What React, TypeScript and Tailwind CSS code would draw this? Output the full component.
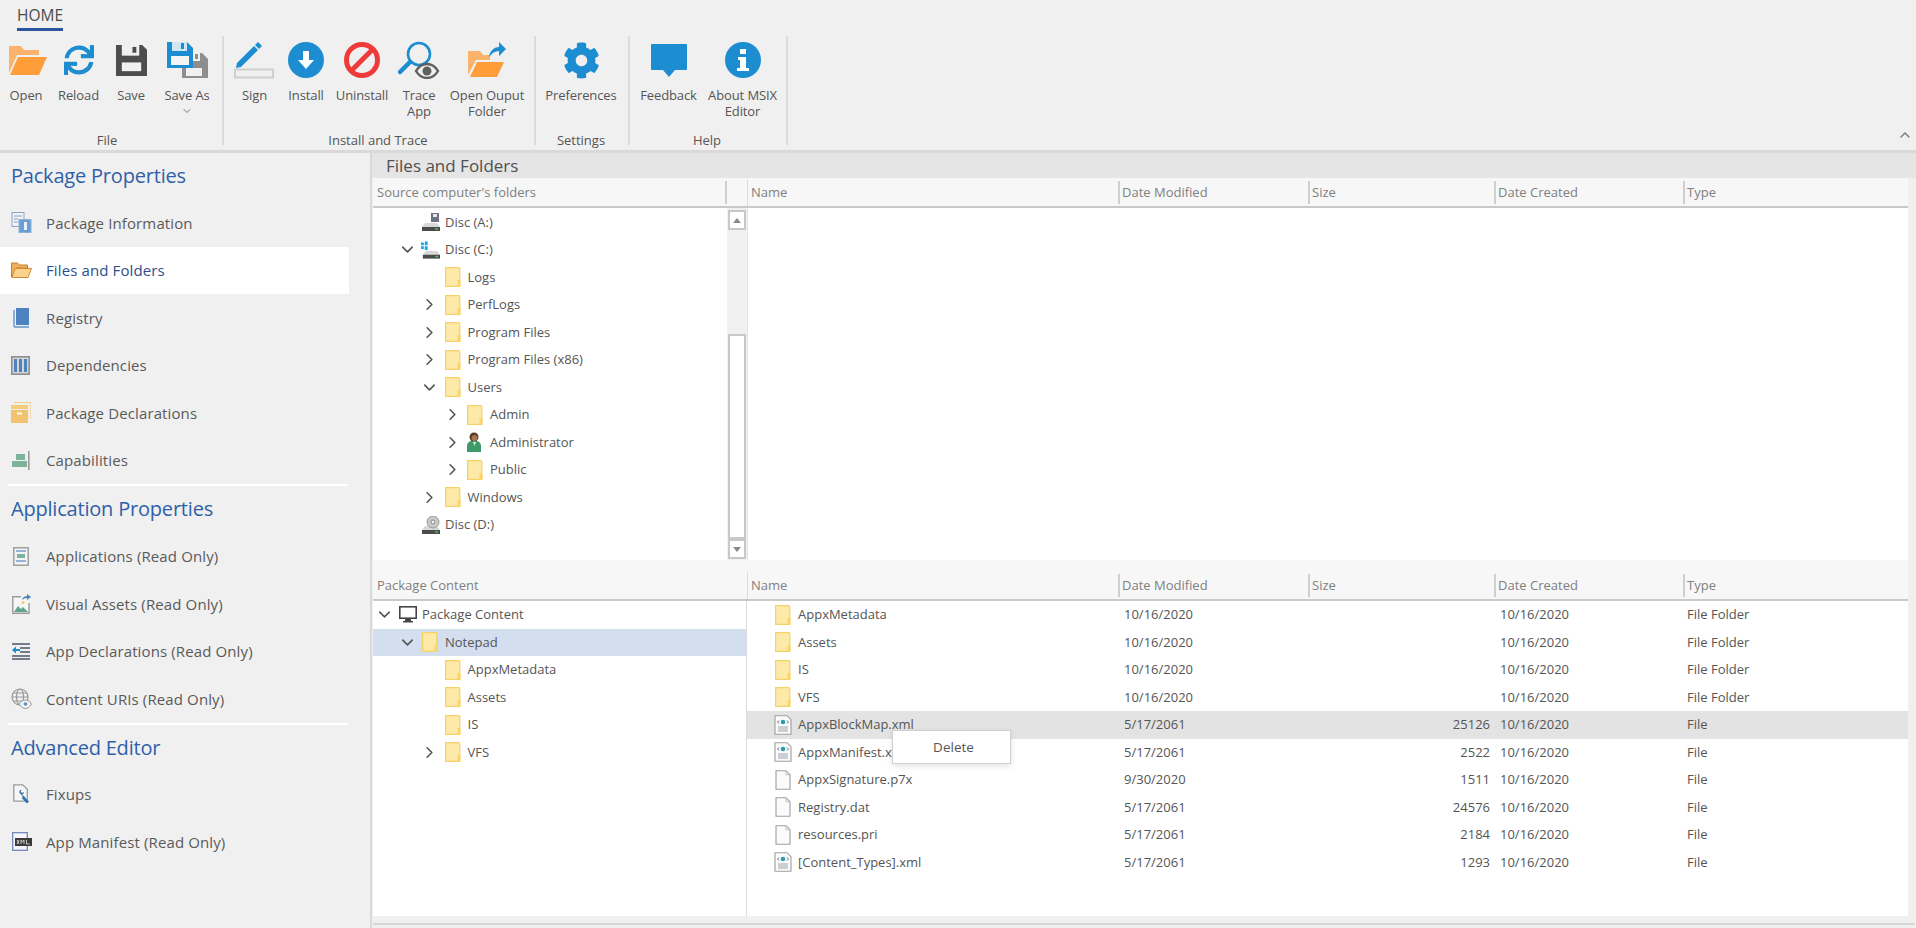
import React from "react";
import { ChevronDown, ChevronRight, ChevronUp } from "lucide-react";
import { FaSync, FaCog } from "react-icons/fa";

const BLUE = "#1b8dd0";

const IcoOpen = () => (
  <svg width="38" height="32" viewBox="0 0 38 32" className="ml-[3px]">
    <path d="M0 2h12l3 4h15v5H8L0 29z" fill="#fbb36b" />
    <path d="M9 13h29l-8 18H1z" fill="#ff9d3b" />
  </svg>
);
const IcoSave = () => (
  <svg width="31" height="31" viewBox="0 0 32 32" className="ml-[1px]">
    <path d="M0 0h27l5 5v27H0z" fill="#4d4d4d" />
    <rect x="6" y="0" width="18" height="11" fill="#f0f0f0" />
    <rect x="17" y="2" width="4" height="6" fill="#4d4d4d" />
    <rect x="6" y="18" width="20" height="9" fill="#f0f0f0" />
  </svg>
);
const IcoSaveAs = () => (
  <svg width="41" height="36" viewBox="0 0 41 36">
    <path d="M15 11h20l6 6v19H15z" fill="#8e8e8e" />
    <rect x="19" y="26" width="16" height="8" fill="#f0f0f0" />
    <rect x="22" y="11" width="11" height="8" fill="#f0f0f0" />
    <rect x="28" y="12" width="3" height="5" fill="#8e8e8e" />
    <path d="M0 0h20l6 6v20H0z" fill={BLUE} />
    <rect x="5" y="0" width="15" height="9" fill="#d0e6f4" />
    <rect x="14" y="1" width="3" height="6" fill={BLUE} />
    <rect x="4" y="14" width="18" height="9" fill="#f4f4f4" />
  </svg>
);
const IcoSign = () => (
  <svg width="41" height="38" viewBox="0 0 41 38">
    <path d="M3 22 L20 5 L24 9 L7 26 L2 27z" fill={BLUE} />
    <path d="M21 4l3-3 4 4-3 3z" fill={BLUE} />
    <rect x="1" y="28.5" width="38" height="8" fill="none" stroke="#cfcfcf" strokeWidth="2" />
  </svg>
);
const IcoInstall = () => (
  <svg width="36" height="36" viewBox="0 0 36 36">
    <circle cx="18" cy="18" r="18" fill={BLUE} />
    <path d="M15 9h6v9h5l-8 9-8-9h5z" fill="#fff" />
  </svg>
);
const IcoUninstall = () => (
  <svg width="36" height="36" viewBox="0 0 36 36">
    <circle cx="18" cy="18" r="15.5" fill="none" stroke="#ee3a3a" strokeWidth="5" />
    <path d="M8 28 28 8" stroke="#ee3a3a" strokeWidth="5" />
  </svg>
);
const IcoTrace = () => (
  <svg width="42" height="38" viewBox="0 0 42 38">
    <circle cx="21" cy="13" r="11" fill="none" stroke={BLUE} strokeWidth="2.6" />
    <path d="M12 21 2 31" stroke={BLUE} strokeWidth="4.5" strokeLinecap="round" />
    <path d="M18 30c3-5 7-7 11-7s8 2 11 7c-3 5-7 7-11 7s-8-2-11-7z" fill="#f0f0f0" stroke="#5f5f5f" strokeWidth="2.4" />
    <circle cx="29" cy="30" r="4.5" fill="#5f5f5f" />
  </svg>
);
const IcoOutput = () => (
  <svg width="38" height="36" viewBox="0 0 38 36">
    <path d="M0 9h12l3 4h7v5H8L0 33z" fill="#fbb36b" />
    <path d="M9 20h27l-7 15H2z" fill="#ff9d3b" />
    <path d="M21 15c1-7 6-10 10-10V0l7 7-7 7V9c-4 0-7 2-10 6z" fill={BLUE} />
  </svg>
);
const IcoFeedback = () => (
  <svg width="36" height="33" viewBox="0 0 36 33">
    <path d="M1 0h34a1 1 0 0 1 1 1v24a1 1 0 0 1-1 1H24l-6 7-6-7H1a1 1 0 0 1-1-1V1a1 1 0 0 1 1-1z" fill={BLUE} />
  </svg>
);
const IcoInfo = () => (
  <svg width="36" height="36" viewBox="0 0 36 36">
    <circle cx="18" cy="18" r="18" fill={BLUE} />
    <path d="M15 7h6v5h-6zM13 15h8v11h3v3H12v-3h3v-8h-2z" fill="#fff" />
  </svg>
);

const IcoPkgInfo = () => (
  <svg width="21" height="21" viewBox="0 0 21 21">
    <rect x="1" y="0.5" width="12" height="14" fill="#eef3fa" stroke="#8fa3bf" />
    <path d="M3 4h8M3 7h4M3 10h4" stroke="#8fa3bf" />
    <rect x="8" y="7.5" width="12" height="13" fill="#6b9fd4" stroke="#8fb0d6" />
    <rect x="13" y="10" width="3" height="8" fill="#e8f0fa" />
  </svg>
);
const IcoFolderSm = () => (
  <svg width="21" height="16" viewBox="0 0 21 16">
    <path d="M0.5 1h6l2 2h8v3H5L1 15H0.5z" fill="#eeb25e" stroke="#c77e2c" />
    <path d="M4 6.5h16.5L17 15.5H1z" fill="#fcd38a" stroke="#d08a35" />
  </svg>
);
const IcoRegistry = () => (
  <svg width="16" height="20" viewBox="0 0 16 20" className="ml-[2px]">
    <path d="M1 2v16q0 1 1 1h14" fill="none" stroke="#5f92cd" strokeWidth="1.4" />
    <rect x="3" y="0" width="13" height="17" fill="#4f83bf" />
  </svg>
);
const IcoDeps = () => (
  <svg width="19" height="19" viewBox="0 0 19 19">
    <rect x="0.8" y="0.8" width="17.4" height="17.4" fill="#d5d5d5" stroke="#8f8f8f" strokeWidth="1.6" />
    <path d="M3 3h3v13H3zM8 3h3v13H8zM13 3h3v13h-3z" fill="#4f83bf" />
  </svg>
);
const IcoDecl = () => (
  <svg width="20" height="21" viewBox="0 0 20 21">
    <path d="M3 0.5h17v17" fill="none" stroke="#f4cf85" strokeWidth="1.2" />
    <path d="M0 3h17v4H0z" fill="#f4cc7c" />
    <rect x="0" y="8" width="17" height="13" fill="#f2c36f" />
    <rect x="6" y="10.5" width="5" height="2" fill="#fff" />
  </svg>
);
const IcoCap = () => (
  <svg width="18" height="19" viewBox="0 0 18 19" className="ml-[1px]">
    <rect x="4" y="3" width="9" height="6" fill="#7fb29a" />
    <rect x="0" y="10" width="15" height="6" fill="#7fb29a" />
    <rect x="16" y="0" width="1.6" height="19" fill="#9a9a9a" />
  </svg>
);
const IcoApps = () => (
  <svg width="16" height="19" viewBox="0 0 16 19" className="ml-[2px]">
    <rect x="0.8" y="0.8" width="14.4" height="17.4" fill="#f4f4f4" stroke="#9a9a9a" strokeWidth="1.4" />
    <path d="M3 4h10M3 14h10" stroke="#6fa0d0" strokeWidth="1.4" />
    <rect x="4" y="7" width="8" height="4" fill="#7fb29a" />
  </svg>
);
const IcoVisual = () => (
  <svg width="19" height="20" viewBox="0 0 19 20" className="ml-[1px]">
    <path d="M9 2.7H0.8v16.5H17V9" fill="#f6f6f6" stroke="#9a9a9a" strokeWidth="1.4" />
    <path d="M2 18l4-6 3 3 2-2 5 5z" fill="#5fa58a" />
    <circle cx="11" cy="8.5" r="1.6" fill="#f6c96a" />
    <path d="M10 6c.5-3 3-4 5-4V0l4 3-4 3V4c-2 0-3 .5-5 2z" fill="#4f83bf" />
  </svg>
);
const IcoAppDecl = () => (
  <svg width="18" height="17" viewBox="0 0 18 17" className="ml-[1px]">
    <path d="M0 1h18M8 5h10M8 9h10M0 13h18M0 16h18" stroke="#4a5568" strokeWidth="1.6" />
    <path d="M0 7l4-3.5V6h4v2H4v2.5z" fill={BLUE} />
  </svg>
);
const IcoUris = () => (
  <svg width="21" height="21" viewBox="0 0 21 21">
    <g fill="none" stroke="#9a9a9a" strokeWidth="1.2">
      <circle cx="9" cy="9" r="8" />
      <ellipse cx="9" cy="9" rx="3.5" ry="8" />
      <path d="M1 9h16M2 5h14M2 13h14" />
    </g>
    <path d="M8 16c2-3 4-4 6.500-4s4.500 1 6 4c-1.500 3-3.500 4.500-6 4.500S10 19 8 16z" fill="#f0f0f0" stroke="#9a9a9a" />
    <circle cx="14.500" cy="16" r="1.800" fill="#5b8fc7" />
  </svg>
);
const IcoFixups = () => (
  <svg width="18" height="20" viewBox="0 0 18 20" className="ml-[2px]">
    <path d="M0.800 0.800h9l4.500 4.500V17.200H0.800z" fill="#f6f6f6" stroke="#9a9a9a" strokeWidth="1.300" />
    <path d="M9.500 12.500 6 8.200l-.6-.4a2.800 2.800 0 0 1 2.300-3.300L6.700 6.600l1.300 1.300 2.100-.9A2.800 2.800 0 0 1 8 9.500l3.500 3z" fill="#356fb0" transform="translate(1 1)" />
    <path d="M10.500 12 16 17.500l-2 2L8.700 14z" fill="#356fb0" />
  </svg>
);
const IcoManifest = () => (
  <svg width="20" height="19" viewBox="0 0 20 19" className="ml-[1px]">
    <rect x="0.700" y="0.700" width="14.600" height="17.600" fill="#f7f7fb" stroke="#6f86bd" strokeWidth="1.300" />
    <rect x="3" y="6" width="17" height="8" fill="#3b3b3b" />
    <path d="M5 8l2 4M7 8l-2 4M9 8v4M12 8v4M9 8l1.500 2 1.500-2M14.500 8v4h3" stroke="#e8e8e8" strokeWidth="0.800" fill="none" />
  </svg>
);

const Folder = () => (
  <svg width="16" height="20" viewBox="0 0 16 20" className="shrink-0">
    <path d="M0.600 0.600h13.200a1 1 0 0 1 1 1V19.400H0.600z" fill="#fde9a8" stroke="#f6d264" strokeWidth="1.200" />
    <path d="M12.500 13h3v6.500h-3z" fill="#f9d56d" />
  </svg>
);
const Doc = () => (
  <svg width="16" height="20" viewBox="0 0 16 20" className="shrink-0">
    <path d="M1 0.700h10l4 4V19.300H1z" fill="#fbfbfb" stroke="#9e9e9e" strokeWidth="1.100" />
    <path d="M11 0.700v4h4" fill="none" stroke="#bdbdbd" />
  </svg>
);
const XmlDoc = () => (
  <svg width="18" height="20" viewBox="0 0 18 20" className="shrink-0 -ml-[1px]">
    <path d="M1 0.700h12l4 4V19.300H1z" fill="#fbfbfb" stroke="#9e9e9e" strokeWidth="1.100" />
    <circle cx="9" cy="7" r="2.300" fill="#2a9fb0" />
    <path d="M5 5.500 3.500 7 5 8.500M13 5.500 14.500 7 13 8.500" fill="none" stroke="#6b6b6b" />
    <path d="M4 12h10M4 14h10M4 16h10" stroke="#9aa3ad" />
  </svg>
);
const DriveBase = () => (
  <>
    <path d="M3 10h12l3 4v4H0v-4z" fill="#d8d8d8" />
    <rect x="0" y="14" width="18" height="4" fill="#4b4b4b" />
    <rect x="13" y="15.200" width="3" height="1.400" fill="#35d05a" />
  </>
);
const DiscA = () => (
  <svg width="18" height="18" viewBox="0 0 18 18">
    <path d="M9 0h8v9H9z" fill="#6b7280" />
    <rect x="11" y="1" width="4" height="3" fill="#e8e8e8" />
    <DriveBase />
  </svg>
);
const DiscC = () => (
  <svg width="20" height="18" viewBox="0 0 20 18" className="-ml-[1px]">
    <g transform="translate(2 0)"><DriveBase /></g>
    <path d="M0 1h3v3H0zM4 0h3v4H4zM0 5h3v3H0zM4 5h3v4H4z" fill="#17a7ee" />
  </svg>
);
const DiscD = () => (
  <svg width="18" height="18" viewBox="0 0 18 18">
    <DriveBase />
    <circle cx="11" cy="6" r="6" fill="#c9c9c9" stroke="#9a9a9a" />
    <circle cx="11" cy="6" r="2" fill="#efefef" stroke="#8a8a8a" />
  </svg>
);
const UserIco = () => (
  <svg width="16" height="20" viewBox="0 0 16 20" className="shrink-0">
    <circle cx="7" cy="5" r="4.500" fill="#5a3a22" />
    <circle cx="7.500" cy="6" r="3" fill="#a87350" />
    <path d="M0 20v-6q0-4 4-5h6q4 1 4 5v6z" fill="#3f9a6b" />
    <path d="M6 10h3l-1.500 4z" fill="#d8efe2" />
  </svg>
);
const Monitor = () => (
  <svg width="18" height="17" viewBox="0 0 18 17">
    <rect x="0.800" y="0.800" width="16.400" height="11.400" fill="#fff" stroke="#454545" strokeWidth="1.600" />
    <path d="M6 13h6v2h2v1.500H4V15h2z" fill="#454545" />
  </svg>
);

type BtnProps = { icon: React.ReactNode; w: string; lines: string[]; chevron?: boolean };
const RibbonBtn = ({ icon, w, lines, chevron }: BtnProps) => (
  <div className={`${w} shrink-0 flex flex-col items-center pt-[2px] text-[13px] leading-[16px] text-[#555]`}>
    <div className="h-[44px] flex items-center justify-center">{icon}</div>
    <div className="mt-[5px] text-center whitespace-nowrap tracking-[-0.1px]">
      {lines.map((l) => (
        <div key={l}>{l}</div>
      ))}
    </div>
    {chevron && <ChevronDown size={12} strokeWidth={2} className="text-[#777] mt-[2px]" />}
  </div>
);

const RibbonGroup = ({ w, pad, label, lp, children }: { w: string; pad: string; label: string; lp: string; children: React.ReactNode }) => (
  <div className={`${w} shrink-0 h-[109px] flex flex-col border-r-2 border-[#dcdcdc]`}>
    <div className={`h-[97px] flex ${pad}`}>{children}</div>
    <div className={`h-[12px] leading-[14px] text-center text-[13px] text-[#555] ${lp}`}>{label}</div>
  </div>
);

const Ribbon = () => (
  <div className="h-[153px] border-b-[3px] border-[#d9d9d9] relative">
    <div className="h-[36px] pl-[17px] pt-[6px]">
      <div className="w-[46px] h-[25px] border-b-[3px] border-[#2b569f] text-[15.500px] leading-[19px] text-[#4a4a4a] whitespace-nowrap">HOME</div>
    </div>
    <div className="flex">
      <RibbonGroup w="w-[224px]" pad="" lp="pr-[8px]" label="File">
        <RibbonBtn w="w-[52px]" icon={<IcoOpen />} lines={["Open"]} />
        <RibbonBtn w="w-[53px]" icon={<FaSync size={30} color={BLUE} />} lines={["Reload"]} />
        <RibbonBtn w="w-[52px]" icon={<IcoSave />} lines={["Save"]} />
        <RibbonBtn w="w-[60px]" icon={<IcoSaveAs />} lines={["Save As"]} chevron />
      </RibbonGroup>
      <RibbonGroup w="w-[312px]" pad="pl-[5px]" lp="pr-[2px]" label="Install and Trace">
        <RibbonBtn w="w-[51px]" icon={<IcoSign />} lines={["Sign"]} />
        <RibbonBtn w="w-[52px]" icon={<IcoInstall />} lines={["Install"]} />
        <RibbonBtn w="w-[60px]" icon={<IcoUninstall />} lines={["Uninstall"]} />
        <RibbonBtn w="w-[54px]" icon={<IcoTrace />} lines={["Trace", "App"]} />
        <RibbonBtn w="w-[82px]" icon={<IcoOutput />} lines={["Open Ouput", "Folder"]} />
      </RibbonGroup>
      <RibbonGroup w="w-[94px]" pad="" lp="pr-[2px]" label="Settings">
        <RibbonBtn w="w-[90px]" icon={<FaCog size={37} color={BLUE} />} lines={["Preferences"]} />
      </RibbonGroup>
      <RibbonGroup w="w-[158px]" pad="" lp="pr-[2px]" label="Help">
        <RibbonBtn w="w-[77px]" icon={<IcoFeedback />} lines={["Feedback"]} />
        <RibbonBtn w="w-[71px]" icon={<IcoInfo />} lines={["About MSIX", "Editor"]} />
      </RibbonGroup>
    </div>
    <ChevronUp size={16} strokeWidth={2} className="absolute right-[3px] top-[127px] text-[#777]" />
  </div>
);

const Heading = ({ children, h }: { children: string; h: string }) => (
  <div className={`${h} pl-[11px] flex items-center text-[20px] text-[#2f5fa8] whitespace-nowrap tracking-[-0.2px]`}>{children}</div>
);
const SideItem = ({ icon, label, active }: { icon: React.ReactNode; label: string; active?: boolean }) => (
  <div className={`h-[47.500px] w-[349px] pl-[11px] flex items-center text-[15px] whitespace-nowrap tracking-[0.12px] ${active ? "bg-white text-[#2b4f8f]" : "text-[#5a5a5a]"}`}>
    <div className="w-[35px] shrink-0 flex items-center">{icon}</div>
    {label}
  </div>
);
const SideRule = () => <div className="h-[2px] w-[340px] ml-[8px] bg-white" />;

const Sidebar = () => (
  <div className="w-[372px] shrink-0 border-r-2 border-[#d9d9d9]">
    <Heading h="h-[46px]">Package Properties</Heading>
    <SideItem icon={<IcoPkgInfo />} label="Package Information" />
    <SideItem icon={<IcoFolderSm />} label="Files and Folders" active />
    <SideItem icon={<IcoRegistry />} label="Registry" />
    <SideItem icon={<IcoDeps />} label="Dependencies" />
    <SideItem icon={<IcoDecl />} label="Package Declarations" />
    <SideItem icon={<IcoCap />} label="Capabilities" />
    <SideRule />
    <Heading h="h-[46.500px]">Application Properties</Heading>
    <SideItem icon={<IcoApps />} label="Applications (Read Only)" />
    <SideItem icon={<IcoVisual />} label="Visual Assets (Read Only)" />
    <SideItem icon={<IcoAppDecl />} label="App Declarations (Read Only)" />
    <SideItem icon={<IcoUris />} label="Content URIs (Read Only)" />
    <SideRule />
    <Heading h="h-[46px]">Advanced Editor</Heading>
    <SideItem icon={<IcoFixups />} label="Fixups" />
    <SideItem icon={<IcoManifest />} label="App Manifest (Read Only)" />
  </div>
);

const Sep = () => <div className="w-[2px] h-[23px] bg-[#cfcfcf] shrink-0" />;
const Cols = () => (
  <div className="flex-1 grid grid-cols-[371px_190px_186px_189px_225px] text-[13px] text-[#808080] items-center">
    {["Name", "Date Modified", "Size", "Date Created", "Type"].map((c, i) => (
      <div key={c} className="flex items-center gap-[2px]">
        {i === 0 ? <div className="w-[1px] h-[27px] bg-[#dcdcdc] shrink-0 mr-[1px]" /> : <Sep />}
        <span>{c}</span>
      </div>
    ))}
  </div>
);

type NodeProps = { pl: string; open?: boolean; leaf?: boolean; icon: React.ReactNode; label: string; selected?: boolean };
const Node = ({ pl, open, leaf, icon, label, selected }: NodeProps) => (
  <div className={`h-[27.500px] flex items-center text-[13px] text-[#555] whitespace-nowrap ${pl} ${selected ? "bg-[#d3deef]" : ""}`}>
    <div className="w-[20px] shrink-0 flex justify-center text-[#555]">
      {!leaf && (open ? <ChevronDown size={19} strokeWidth={2} /> : <ChevronRight size={19} strokeWidth={2} />)}
    </div>
    <div className="w-[18px] ml-[5px] mr-[5px] shrink-0 flex items-center">{icon}</div>
    {label}
  </div>
);

type RowProps = { icon: React.ReactNode; name: string; mod: string; size?: string; created: string; type: string; hover?: boolean };
const Row = ({ icon, name, mod, size, created, type, hover }: RowProps) => (
  <div className={`h-[27.500px] grid grid-cols-[371px_190px_186px_189px_225px] items-center text-[13px] text-[#555] whitespace-nowrap ${hover ? "bg-[#e3e3e3]" : ""}`}>
    <div className="pl-[28px] flex items-center">
      <div className="w-[23px] shrink-0 flex items-center">{icon}</div>
      {name}
    </div>
    <div className="pl-[6px]">{mod}</div>
    <div className="pr-[4px] text-right">{size}</div>
    <div className="pl-[6px]">{created}</div>
    <div className="pl-[4px]">{type}</div>
  </div>
);

const ScrollBtn = ({ up }: { up?: boolean }) => (
  <div className="h-[20px] mx-[1px] bg-white border-2 border-[#c8c8c8] flex items-center justify-center">
    <div className={`w-0 h-0 border-x-[4px] border-x-transparent ${up ? "border-b-[5px] border-b-[#8a8a8a]" : "border-t-[5px] border-t-[#8a8a8a]"}`} />
  </div>
);

const Content = () => (
  <div className="flex-1 min-w-0 flex flex-col">
    <div className="h-[25px] bg-[#e5e5e5] pl-[14px] flex items-center text-[17px] text-[#505050] shrink-0">Files and Folders</div>

    <div className="h-[30px] pt-[1px] mr-[8px] ml-[1px] bg-[#f7f7f7] border-b-2 border-[#c9c9c9] flex items-center shrink-0">
      <div className="w-[374px] flex items-center shrink-0 text-[13px] text-[#808080]">
        <span className="pl-[4px] w-[352px]">Source computer's folders</span>
        <Sep />
      </div>
      <Cols />
    </div>
    <div className="h-[352px] mr-[8px] ml-[1px] flex shrink-0 bg-white">
      <div className="w-[354px] shrink-0 pt-[0.500px]">
        <Node pl="pl-[24px]" leaf icon={<DiscA />} label="Disc (A:)" />
        <Node pl="pl-[24px]" open icon={<DiscC />} label="Disc (C:)" />
        <Node pl="pl-[46.500px]" leaf icon={<Folder />} label="Logs" />
        <Node pl="pl-[46.500px]" icon={<Folder />} label="PerfLogs" />
        <Node pl="pl-[46.500px]" icon={<Folder />} label="Program Files" />
        <Node pl="pl-[46.500px]" icon={<Folder />} label="Program Files (x86)" />
        <Node pl="pl-[46.500px]" open icon={<Folder />} label="Users" />
        <Node pl="pl-[69px]" icon={<Folder />} label="Admin" />
        <Node pl="pl-[69px]" icon={<UserIco />} label="Administrator" />
        <Node pl="pl-[69px]" icon={<Folder />} label="Public" />
        <Node pl="pl-[46.500px]" icon={<Folder />} label="Windows" />
        <Node pl="pl-[24px]" leaf icon={<DiscD />} label="Disc (D:)" />
      </div>
      <div className="w-[20px] shrink-0 bg-[#f0f0f0] flex flex-col pt-[2px] pb-[1px]">
        <ScrollBtn up />
        <div className="h-[104px]" />
        <div className="flex-1 mx-[1px] bg-white border-2 border-[#c8c8c8]" />
        <ScrollBtn />
      </div>
      <div className="flex-1 border-l border-[#e6e6e6]" />
    </div>

    <div className="h-[41px] mr-[8px] ml-[1px] bg-[#f7f7f7] border-b-2 border-[#c9c9c9] flex items-end shrink-0">
      <div className="w-[374px] shrink-0 h-[27px] text-[13px] text-[#808080] pl-[4px] flex items-center">Package Content</div>
      <div className="flex-1 h-[27px] flex items-center"><Cols /></div>
    </div>
    <div className="h-[315px] mr-[8px] ml-[1px] flex shrink-0 bg-white">
      <div className="w-[374px] shrink-0 border-r border-[#dcdcdc]">
        <Node pl="pl-[1px]" open icon={<Monitor />} label="Package Content" />
        <Node pl="pl-[24px]" open selected icon={<Folder />} label="Notepad" />
        <Node pl="pl-[46.500px]" leaf icon={<Folder />} label="AppxMetadata" />
        <Node pl="pl-[46.500px]" leaf icon={<Folder />} label="Assets" />
        <Node pl="pl-[46.500px]" leaf icon={<Folder />} label="IS" />
        <Node pl="pl-[46.500px]" icon={<Folder />} label="VFS" />
      </div>
      <div className="flex-1 min-w-0 relative">
        <Row icon={<Folder />} name="AppxMetadata" mod="10/16/2020" created="10/16/2020" type="File Folder" />
        <Row icon={<Folder />} name="Assets" mod="10/16/2020" created="10/16/2020" type="File Folder" />
        <Row icon={<Folder />} name="IS" mod="10/16/2020" created="10/16/2020" type="File Folder" />
        <Row icon={<Folder />} name="VFS" mod="10/16/2020" created="10/16/2020" type="File Folder" />
        <Row hover icon={<XmlDoc />} name="AppxBlockMap.xml" mod="5/17/2061" size="25126" created="10/16/2020" type="File" />
        <Row icon={<XmlDoc />} name="AppxManifest.xml" mod="5/17/2061" size="2522" created="10/16/2020" type="File" />
        <Row icon={<Doc />} name="AppxSignature.p7x" mod="9/30/2020" size="1511" created="10/16/2020" type="File" />
        <Row icon={<Doc />} name="Registry.dat" mod="5/17/2061" size="24576" created="10/16/2020" type="File" />
        <Row icon={<Doc />} name="resources.pri" mod="5/17/2061" size="2184" created="10/16/2020" type="File" />
        <Row icon={<XmlDoc />} name="[Content_Types].xml" mod="5/17/2061" size="1293" created="10/16/2020" type="File" />
        <div className="absolute left-[145px] top-[129px] w-[119px] h-[34px] pl-[4px] bg-white border border-[#d0d0d0] shadow-[0_2px_6px_rgba(0,0,0,0.12)] flex items-center justify-center text-[13.500px] text-[#555]">Delete</div>
      </div>
    </div>
    <div className="h-[7px] shrink-0" />
    <div className="h-[2px] mx-[1px] bg-[#d6d6d6] shrink-0" />
  </div>
);

export default function App() {
  return (
    <div className="w-[1916px] h-[928px] overflow-hidden bg-[#f0f0f0] font-['Open_Sans','Noto_Sans',sans-serif] flex flex-col">
      <Ribbon />
      <div className="flex-1 flex min-h-0">
        <Sidebar />
        <Content />
      </div>
    </div>
  );
}
